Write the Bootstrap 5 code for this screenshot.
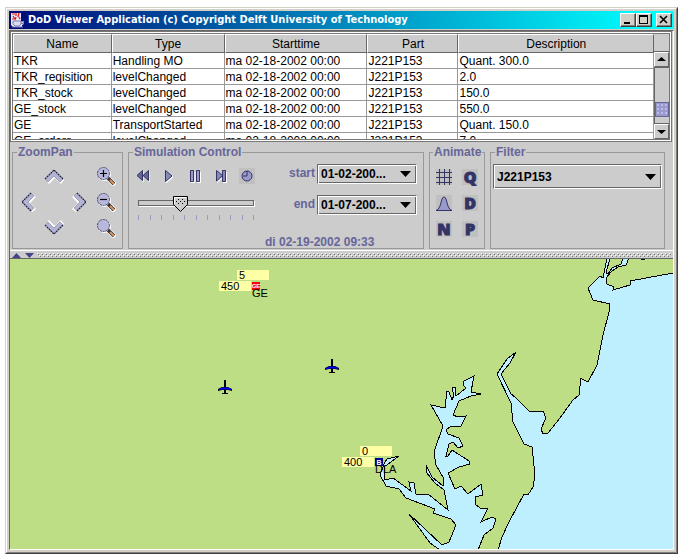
<!DOCTYPE html>
<html lang="en">
<head>
<meta charset="utf-8">
<meta name="viewport" content="width=device-width, initial-scale=1">
<title>DoD Viewer Application</title>
<link href="https://cdn.jsdelivr.net/npm/bootstrap@5.3.0/dist/css/bootstrap.min.css" rel="stylesheet">
<style>
:root { --metal: #ccc; --shade: #999; --edge: #666; --ink: #669; --navy: #336; }
body { font: 12px/14px "Liberation Sans", Arial, sans-serif; color: #000; background: #fff; padding: 7px 6px 5px 5px; }
button { padding: 0; border: 0; background: none; color: inherit; }
svg { display: block; }

.frame { border: 1px solid; border-color: #d4d0c8 #404040 #404040 #d4d0c8; min-height: calc(100vh - 12px); }
.frame-in { border: 1px solid; border-color: #fff #808080 #808080 #fff; padding: 2px; background: #d4d0c8; }
.titlebar { height: 18px; padding: 0 2px 0 1px; background: linear-gradient(90deg, #000a78, #00ffff 97%); color: #fff; }
.titlebar h1 { font: bold 11px/18px "DejaVu Sans Condensed", "DejaVu Sans", sans-serif; margin: 0; padding-left: 2px; }
.winbtn { width: 16px; height: 14px; background: #d4d0c8; border: 1px solid; border-color: #fff #404040 #404040 #fff; box-shadow: inset -1px -1px #808080; }
.client { margin-top: 1px; background: var(--metal); border: 1px solid; border-color: var(--edge) #fff #fff var(--edge); }

.log { height: 111px; margin-right: 1px; border: 3px double #777; background: #fff; overflow: hidden; }
.log table { table-layout: fixed; width: 100%; border-collapse: separate; border-spacing: 0; }
.log th { height: 19px; padding: 0; font-weight: normal; text-align: center; background: var(--metal); border: 1px solid; border-color: #fff var(--edge) var(--edge) #fff; }
.log td { height: 16px; padding: 1px 0 0 1px; line-height: 14px; border: 1px solid #999; border-width: 0 1px 1px 0; white-space: nowrap; }
.c-name { width: 15.4%; } .c-type { width: 17.6%; } .c-time { width: 22.3%; } .c-part { width: 14.2%; }
.scroller { width: 15px; background: var(--metal); }
.scroller .corner { height: 18px; border-bottom: 1px solid var(--edge); }
.scroller button { height: 15px; border: 1px solid; border-color: #fff var(--edge) var(--edge) #fff; }
.scroller .trough { border: 1px solid var(--edge); border-width: 1px 0 1px 1px; padding-bottom: 6px; }
.scroller .grip { height: 15px; border: 1px solid var(--ink); background: radial-gradient(circle, #bbe 1px, transparent 1px) 0 0/4px 4px #99c; }

.controls { padding: 3px 8px 1px 2px; border-bottom: 1px solid #fff; gap: 5px; }
.controls fieldset { border: 1px solid var(--shade); height: 104px; }
.controls legend { float: none; width: auto; margin: 0 0 0 4px; padding: 0 1px; font: bold 12px/14px "Liberation Sans", Arial, sans-serif; color: var(--ink); }
.g-zoom { width: 111px; } .g-sim { width: 296px; } .g-anim { width: 56px; }
.g-anim legend { margin-left: 3px; }
.tools { display: grid; grid-auto-rows: 26px; padding: 4px 1px; }
.tools button { display: flex; align-items: center; justify-content: center; }
.t4 { grid-template-columns: repeat(4, 26px); padding: 4px 2px; }
.t5 { grid-template-columns: repeat(5, 26px); }
.t2 { grid-template-columns: repeat(2, 26px); padding: 5px 1px; }
.tile { display: block; background: #c0c0c0; width: 16px; height: 16px; }
.glyph { font: 900 16px/16px "Open Sans", "Liberation Sans", Arial, sans-serif; font-weight: 800; color: var(--navy); -webkit-text-stroke: 1px var(--navy); text-align: center; }
.slide { width: 116px; margin-left: 9px; }
.slide input { appearance: none; display: block; width: 100%; height: 18px; margin: 5px 0 0; background: none; }
.slide input::-webkit-slider-runnable-track { height: 6px; border: 1px solid var(--edge); box-shadow: 1px 1px #fff; }
.slide input::-webkit-slider-thumb { appearance: none; width: 15px; height: 16px; margin-top: -5px; border: 0; border-radius: 0; box-shadow: none;
  background: url("data:image/svg+xml,%3Csvg xmlns='http://www.w3.org/2000/svg' width='15' height='16'%3E%3Cpath d='M.5.5h14v8l-7 7-7-7z' fill='%23ccc' stroke='%23000'/%3E%3Cpath d='M1.5 8V1.5h12' fill='none' stroke='%23fff'/%3E%3Cpath d='M5 3.500h1m3 0h1M3 5.500h1m3 0h1m3 0h1M5 7.500h1m3 0h1' stroke='%23000'/%3E%3C/svg%3E") no-repeat; }
.ticks { height: 5px; margin-top: 3px; }
.ticks i { width: 1px; background: #99c; }
.range { display: grid; grid-template-columns: 50px 100px; grid-auto-rows: 20px; gap: 11px 2px; margin-top: 5px; }
.range label, .clock { font-weight: bold; color: var(--ink); }
.range label { text-align: right; line-height: 18px; }
.clock { display: block; margin-top: 20px; }
.combo { height: 20px; width: 100%; padding: 0 18px 0 3px; font: bold 12px/16px "Liberation Sans", Arial, sans-serif; color: #000; appearance: none; border-radius: 0;
  border: 1px solid; border-color: var(--edge) #fff #fff var(--edge); box-shadow: inset 1px 1px #fff, inset -1px -1px var(--edge);
  background: url("data:image/svg+xml,%3Csvg xmlns='http://www.w3.org/2000/svg' width='11' height='6'%3E%3Cpath d='M0 0h11L5.5 6z'/%3E%3C/svg%3E") no-repeat right 5px center var(--metal); }
.combo.tall { height: 25px; }
.filter-body { padding: 5px 2px 0; }

.splitter { height: 8px; padding: 2px 2px 0; border-bottom: 1px solid var(--edge); gap: 3px; }
.splitter .bumps { height: 4px; background-image: linear-gradient(#fff, #fff), linear-gradient(#777, #777), linear-gradient(#fff, #fff), linear-gradient(#777, #777);
  background-size: 4px 4px; background:
  conic-gradient(from 270deg at 1px 1px, #fff 90deg, transparent 0) 0 0/4px 4px,
  conic-gradient(from 270deg at 1px 1px, #777 90deg, transparent 0) 1px 1px/4px 4px,
  conic-gradient(from 270deg at 1px 1px, #fff 90deg, transparent 0) 2px 2px/4px 4px,
  conic-gradient(from 270deg at 1px 1px, #777 90deg, transparent 0) 3px 3px/4px 4px; }
.map { min-height: 200px; flex: 1 1 0; overflow: hidden; background: #bdde84; }
.map text { font: 11px "Liberation Sans", Arial, sans-serif; }
.map .tag { font: bold 7px "Liberation Sans", Arial, sans-serif; fill: #fff; text-anchor: middle; }
.map .tag-narrow { font-size: 6px; }
</style>
<script src="https://cdn.jsdelivr.net/npm/bootstrap@5.3.0/dist/js/bootstrap.bundle.min.js"></script>
</head>
<body>
<div class="frame d-flex flex-column">
<div class="frame-in d-flex flex-column flex-grow-1">
  <header class="titlebar d-flex align-items-center">
    <svg width="16" height="16" viewBox="0 0 16 16" aria-hidden="true">
      <path d="M1 1h10v8h3v3l-2 1v2H3l-2-2z" fill="#e8e8f4"/>
      <path d="M2 2h3M6 1v3M9 1l-1 4M3 4l2 3M6 5l-1 3M9 5l1 2M2 7h2" stroke="#e01818" stroke-width="1.2" fill="none"/>
      <path d="M3 9h8v3l-2 2H5l-2-2zM11 9.500h2.500v2H11M2 15h11" fill="#dde" stroke="#7878b8"/>
    </svg>
    <h1 class="flex-grow-1 text-nowrap">DoD Viewer Application (c) Copyright Delft University of Technology</h1>
    <button class="winbtn" aria-label="Minimize"><svg width="14" height="12"><path d="M3 8h6v2H3z"/></svg></button>
    <button class="winbtn" aria-label="Maximize"><svg width="14" height="12"><path d="M2 1h9v9H2zM3 3v6h7V3z" fill-rule="evenodd"/></svg></button>
    <button class="winbtn ms-1" aria-label="Close"><svg width="14" height="12"><path d="M3 2l7 7M10 2L3 9" stroke="#000" stroke-width="1.600"/></svg></button>
  </header>
  <main class="client d-flex flex-column flex-grow-1">
    <section class="log d-flex">
      <div class="flex-grow-1">
      <table>
        <thead><tr><th class="c-name">Name</th><th class="c-type">Type</th><th class="c-time">Starttime</th><th class="c-part">Part</th><th>Description</th></tr></thead>
        <tbody>
          <tr><td>TKR</td><td>Handling MO</td><td>ma 02-18-2002 00:00</td><td>J221P153</td><td>Quant. 300.0</td></tr>
          <tr><td>TKR_reqisition</td><td>levelChanged</td><td>ma 02-18-2002 00:00</td><td>J221P153</td><td>2.0</td></tr>
          <tr><td>TKR_stock</td><td>levelChanged</td><td>ma 02-18-2002 00:00</td><td>J221P153</td><td>150.0</td></tr>
          <tr><td>GE_stock</td><td>levelChanged</td><td>ma 02-18-2002 00:00</td><td>J221P153</td><td>550.0</td></tr>
          <tr><td>GE</td><td>TransportStarted</td><td>ma 02-18-2002 00:00</td><td>J221P153</td><td>Quant. 150.0</td></tr>
          <tr><td>GE_orders</td><td>levelChanged</td><td>ma 02-18-2002 00:00</td><td>J221P153</td><td>7.0</td></tr>
        </tbody>
      </table>
      </div>
      <div class="scroller d-flex flex-column flex-shrink-0">
        <div class="corner"></div>
        <button aria-label="Scroll up"><svg width="13" height="13"><path d="M2 8h9L6.500 4z"/></svg></button>
        <div class="trough flex-grow-1 d-flex flex-column justify-content-end"><div class="grip"></div></div>
        <button aria-label="Scroll down"><svg width="13" height="13"><path d="M2 5h9L6.500 9z"/></svg></button>
      </div>
    </section>

    <section class="controls d-flex">
      <fieldset class="g-zoom flex-shrink-0">
        <legend>ZoomPan</legend>
        <svg width="0" height="0" class="position-absolute" aria-hidden="true">
          <defs>
            <g id="chev"><path d="M2 12l9-9 9 9-3 4-6-6-6 6z" fill="#fff"/><path d="M1 11l9-9 9 9-3 3-6-6-6 6z" fill="#b4b4d4"/><path d="M1 11l9-9 9 9" fill="none" stroke="#224" stroke-width="1.2" stroke-dasharray="2 .6"/><path d="M1 11l3 3 6-6 6 6 3-3" fill="none" stroke="#889" stroke-width=".7"/></g>
            <g id="lens"><path d="M13 13l6 6" stroke="#fff" stroke-width="5"/><circle cx="8.500" cy="8.500" r="6.500" fill="#fff"/><path d="M12 12l6 6" stroke="#333" stroke-width="3.500"/><path d="M14 14l4 4" stroke="#e09860" stroke-width="1.800"/><circle cx="7.500" cy="7.500" r="6" fill="#b8b8dc" stroke="#446" stroke-dasharray="2 .7"/></g>
          </defs>
        </svg>
        <div class="tools t4">
          <span></span>
          <button aria-label="Pan up"><svg width="20" height="16"><use href="#chev"/></svg></button>
          <span></span>
          <button aria-label="Zoom in"><svg width="20" height="20"><use href="#lens"/><path d="M4 7.500h7M7.500 4v7" stroke="#000" stroke-width="1.200"/></svg></button>
          <button aria-label="Pan left"><svg width="16" height="20"><use href="#chev" transform="matrix(0 1 1 0 0 0)"/></svg></button>
          <span></span>
          <button aria-label="Pan right"><svg width="18" height="20"><use href="#chev" transform="matrix(0 1 -1 0 17 0)"/></svg></button>
          <button aria-label="Zoom out"><svg width="20" height="20"><use href="#lens"/><path d="M4 7.500h7" stroke="#000" stroke-width="1.200"/></svg></button>
          <span></span>
          <button aria-label="Pan down"><svg width="20" height="18"><use href="#chev" transform="matrix(1 0 0 -1 0 17)"/></svg></button>
          <span></span>
          <button aria-label="Zoom window"><svg width="20" height="20"><use href="#lens"/></svg></button>
        </div>
      </fieldset>

      <fieldset class="g-sim flex-shrink-0">
        <legend>Simulation Control</legend>
        <div class="d-flex">
          <div>
            <div class="tools t5 pb-0">
              <button aria-label="Rewind"><svg width="14" height="12"><path d="M7 1v11M13 1v11" stroke="#fff"/><path d="M6.500.5v10L1 5.500zM12.500.5v10L7 5.500z" fill="#669" stroke="#336"/></svg></button>
              <button aria-label="Play"><svg width="8" height="13"><path d="M1 12.500l7-6" stroke="#fff" stroke-width="1.500"/><path d="M.5.5v11l6.500-5.500z" fill="#88b" stroke="#336"/></svg></button>
              <button aria-label="Pause"><svg width="11" height="13"><path d="M1 12.500h4M5 2v10M7 12.500h4M10.500 2v10" stroke="#fff"/><path d="M.5.500h3v11h-3zM6.500.500h3v11h-3z" fill="#99c" stroke="#336"/></svg></button>
              <button aria-label="Step"><svg width="11" height="13"><path d="M1 12.500l5-4M7 12.500h4M10.500 2v10" stroke="#fff"/><path d="M.5.500v10.500l6-5.500zM6.500.500h3v11h-3z" fill="#88b" stroke="#336"/></svg></button>
              <button aria-label="Real time"><svg class="tile" width="16" height="16"><circle cx="8" cy="8" r="5" fill="#99c" stroke="#336"/><path d="M8 3v5H4" fill="none" stroke="#336"/></svg></button>
            </div>
            <div class="slide">
              <input type="range" min="0" max="100" value="34" aria-label="Speed">
              <div class="ticks d-flex justify-content-between"><i></i><i></i><i></i><i></i><i></i><i></i><i></i><i></i><i></i><i></i><i></i></div>
            </div>
          </div>
          <div class="ms-1">
            <div class="range">
              <label for="from">start</label><select id="from" class="combo"><option>01-02-200...</option></select>
              <label for="to">end</label><select id="to" class="combo"><option>01-07-200...</option></select>
            </div>
            <output class="clock">di 02-19-2002 09:33</output>
          </div>
        </div>
      </fieldset>

      <fieldset class="g-anim flex-shrink-0">
        <legend>Animate</legend>
        <div class="tools t2">
          <button aria-label="Grid"><svg class="tile" width="16" height="16"><path d="M3.500 0v16M8.500 0v16M13.500 0v16M0 3.500h16M0 8.500h16M0 13.500h16" stroke="#336"/></svg></button>
          <button><span class="tile glyph">Q</span></button>
          <button aria-label="Distribution"><svg class="tile" width="16" height="16"><path d="M0 15.500l2-1L4 11l2-7 1.500-2h1L10 4l2 7 2 3.500 2 1z" fill="#99c" stroke="#336"/></svg></button>
          <button><span class="tile glyph">D</span></button>
          <button><span class="tile glyph">N</span></button>
          <button><span class="tile glyph">P</span></button>
        </div>
      </fieldset>

      <fieldset class="flex-grow-1">
        <legend>Filter</legend>
        <div class="filter-body"><select class="combo tall" aria-label="Filter"><option>J221P153</option></select></div>
      </fieldset>
    </section>

    <div class="splitter d-flex">
      <svg width="22" height="5" aria-hidden="true"><path d="M0 5h9L4.500 0zM13 0h9l-4.500 5z" fill="#448"/></svg>
      <div class="bumps flex-grow-1"></div>
    </div>

    <section class="map">
      <svg width="100%" height="100%" viewBox="10 259 663 290" preserveAspectRatio="xMinYMin slice" role="img" aria-label="Map of the transport network">
        <g fill="#bdefff" stroke="#000" shape-rendering="crispEdges">
          <path d="M607 258L603 278 600 276 588 288 593 300 610 304 609 312 603 335 597 365 588 382 580 378 580 386 579 395 573 400 565 411 560 418 548 433 543 434 541 429 546 418 543 411 529 411 515 397 511 394 501 374 510 363 516 352 507 359 497 374 511 403 513 422 524 444 532 447 535 475 533 487 528 495 524 494 509 522 502 537 498 550H680V272L673 273 630 281 630 285 613 290 614 287 607 284 606 278 612 271 618 267 626 265 629 258z"/>
          <path fill="#bdde84" d="M610 258L606 273 608 274 612 268 621 264 623 258z"/>
          <path d="M478 550L484 535 493 528 496 519 492 517 481 522 488 508 480 508 475 504 475 497 483 495 481 484 468 494 461 486 455 489 448 473 459 467 470 464 469 461 452 450 448 456 446 456 449 444 453 442 458 448 463 446 459 438 448 434 446 430 450 427 461 426 466 416 458 417 453 415 459 401 471 396 481 394 471 392 474 376 464 381 463 385 466 388 456 396 455 387 452 388 454 395 452 400 449 392 447 391 445 408 431 405 443 426 434 452 436 465 444 479 443 486 432 477 426 465 426 472 435 483 444 490 448 510 428 494 416 494 414 483 409 482 411 491 393 478 385 480 384 467 399 456 387 459 384 464 380 475 386 486 399 489 406 498 435 509 433 513 451 519 456 525 449 542 442 545 409 514 430 543 440 550z"/>
          <path d="M641 259.500h4"/>
        </g>
        <g fill="#ffffa5"><path d="M237 270h32v10h-32zM219 281h32v10h-32zM360 446h32v10h-32zM342 457h32v10h-32z"/></g>
        <path d="M252 282h8v8h-8z" fill="#f00"/><text class="tag tag-narrow" x="256" y="288">GE</text>
        <path d="M375 458h8v8h-8z" fill="#008"/><text class="tag" x="379" y="465">B</text>
        <text x="239" y="279">5</text><text x="221" y="290">450</text><text x="252" y="297">GE</text>
        <text x="362" y="455">0</text><text x="344" y="466">400</text><text x="375" y="473">DLA</text>
        <defs><g id="plane"><path d="M-1 -7h2v14h-2zM-3 6h6v1h-6z"/><path d="M-7 4V2l4-2h6l4 2v2L3 3h-6z"/><path d="M-6 2.500l3-1.500h6l3 1.500L3 2h-6z" fill="#00f" stroke="#00f"/></g></defs>
        <use href="#plane" x="225" y="387"/><use href="#plane" x="332" y="366"/>
      </svg>
    </section>
  </main>
</div>
</div>
</body>
</html>
